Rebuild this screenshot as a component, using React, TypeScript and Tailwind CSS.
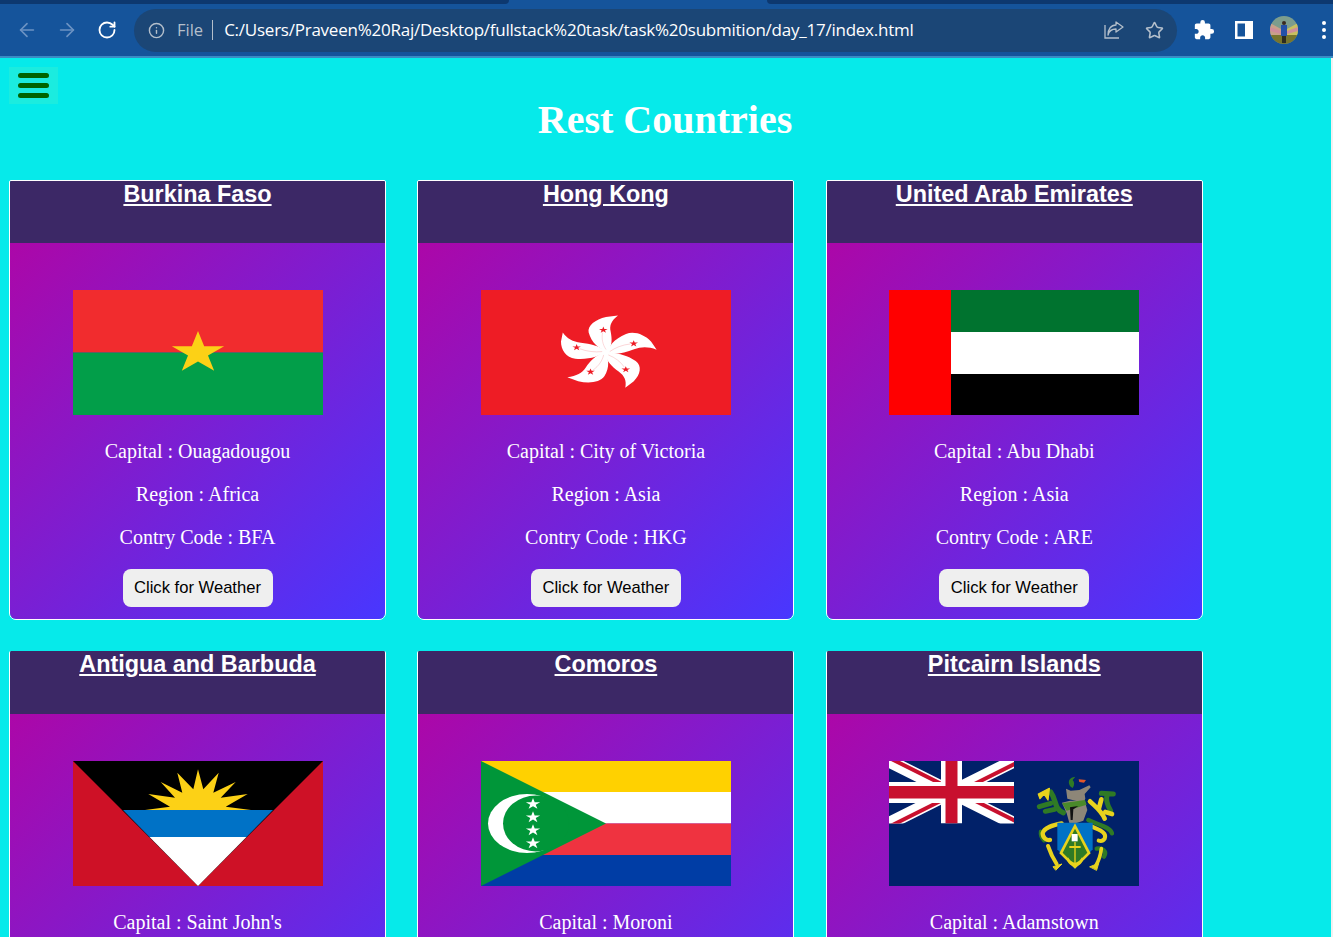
import React from 'react'
import { ArrowLeft, ArrowRight, RotateCw, Info, Star } from 'lucide-react'
import { MdExtension } from 'react-icons/md'

const starPoints = (cx: number, cy: number, r: number, sx = 1) =>
  Array.from({ length: 10 }, (_, i) => {
    const rad = i % 2 === 0 ? r : r * 0.382
    const a = (Math.PI / 5) * i - Math.PI / 2
    return `${cx + rad * Math.cos(a) * sx},${cy + rad * Math.sin(a)}`
  }).join(' ')

function Flag({ children }: { children: React.ReactNode }) {
  return (
    <svg viewBox="0 0 250 125" className="block w-[250px] h-[125px]">
      {children}
    </svg>
  )
}

function BurkinaFaso() {
  return (
    <Flag>
      <rect width="250" height="62.5" fill="#f12c2e" />
      <rect y="62.5" width="250" height="62.5" fill="#029e49" />
      <polygon points={starPoints(125, 63, 22, 1.25)} fill="#fcd116" />
    </Flag>
  )
}

function HongKong() {
  const angles = [0, 72, 144, 216, 288]
  return (
    <Flag>
      <rect width="250" height="125" fill="#ee1c25" />
      <g transform="translate(125 62.5) scale(1.333 1)">
        <circle r="5" fill="#fff" />
        {angles.map((a) => (
          <g key={a} transform={`rotate(${a})`}>
            <path
              d="M1 -1C-5 -3 -11 -10 -13 -20C-14 -27 -8 -33 0 -35.5C3 -36 6 -36.5 9 -37C4 -32 2.5 -27 3.5 -21C4.5 -14 5 -6 1 -1Z"
              fill="#fff"
            />
            <path d="M0 -3C-2.5 -8 -3.5 -14 -2.5 -20" stroke="#f8b0b4" strokeWidth="0.4" fill="none" />
            <polygon points={starPoints(-2, -22.5, 3.4)} fill="#ee1c25" />
          </g>
        ))}
      </g>
    </Flag>
  )
}

function Uae() {
  return (
    <Flag>
      <rect width="250" height="42" fill="#00732f" />
      <rect y="42" width="250" height="42" fill="#fff" />
      <rect y="84" width="250" height="41" fill="#000" />
      <rect width="62" height="125" fill="#f00" />
    </Flag>
  )
}

function Antigua() {
  return (
    <Flag>
      <rect width="250" height="125" fill="#ce1126" />
      <polygon points="0,0 250,0 125,125" fill="#000" />
      <polygon points="50,49 200,49 173.5,76 76.5,76" fill="#0072c6" />
      <polygon points="76.5,76 173.5,76 125,125" fill="#fff" />
      <polygon
        points="72,49 97,45.7 75.3,33 102,36.7 87.7,21 109.3,31.7 104.3,11.7 120.3,28.3 125,8.3 130.3,28.3 145.7,11.7 140.3,31.7 162.7,21 147.7,36.7 174.7,33 152.7,45.7 178,49"
        fill="#fcd116"
      />
    </Flag>
  )
}

function Comoros() {
  return (
    <Flag>
      <rect width="250" height="31.5" fill="#ffd100" />
      <rect y="31" width="250" height="31.5" fill="#fff" />
      <rect y="62.5" width="250" height="31.5" fill="#ef3340" />
      <rect y="94" width="250" height="31" fill="#003da5" />
      <polygon points="0,0 125,62.5 0,125" fill="#009639" />
      <ellipse cx="46" cy="62.5" rx="39" ry="29.5" fill="#fff" />
      <ellipse cx="55" cy="62.5" rx="33" ry="28" fill="#009639" />
      {[43, 56.3, 69.3, 82.3].map((y) => (
        <polygon key={y} points={starPoints(52, y, 6, 1.25)} fill="#fff" />
      ))}
    </Flag>
  )
}

function Pitcairn() {
  return (
    <Flag>
      <rect width="250" height="125" fill="#012169" />
      <svg x="0" y="0" width="125" height="62.5" viewBox="0 0 125 62.5">
        <path d="M0 0L125 62.5M125 0L0 62.5" stroke="#fff" strokeWidth="13" />
        <path d="M0 0L62.5 31.25M125 62.5L62.5 31.25" stroke="#c8102e" strokeWidth="4" transform="translate(2.5 -2)" />
        <path d="M125 0L62.5 31.25M0 62.5L62.5 31.25" stroke="#c8102e" strokeWidth="4" transform="translate(2.5 2)" />
        <rect x="52" width="21" height="62.5" fill="#fff" />
        <rect y="21" width="125" height="21" fill="#fff" />
        <rect x="56.5" width="12" height="62.5" fill="#c8102e" />
        <rect y="25" width="125" height="12.5" fill="#c8102e" />
      </svg>
      {/* coat of arms, drawn at 3x */}
      <g transform="translate(141 9) scale(0.3333)" fill="none" strokeLinecap="round" strokeLinejoin="round">
        <g stroke="#2f7a25">
          <path d="M100 128C72 118 80 90 62 66" strokeWidth="16" />
          <path d="M62 100L28 110M74 118L46 124" strokeWidth="15" />
          <path d="M214 70L250 72M232 72C226 88 230 102 242 122" strokeWidth="15" />
          <path d="M175 150C205 165 240 170 246 190" strokeWidth="13" />
          <path d="M42 212C34 204 30 196 32 184" strokeWidth="11" />
          <path d="M200 236C216 232 232 244 222 260" strokeWidth="13" />
        </g>
        <path d="M25 72L58 55L54 90L42 72L30 86Z" fill="#e8d21d" stroke="#e8d21d" strokeWidth="4" />
        <g stroke="#e8d21d">
          <path d="M180 94C196 110 214 122 224 146M206 118L214 88M226 126L246 132" strokeWidth="14" />
          <path d="M95 160C70 165 42 172 38 190C38 204 50 212 60 210" strokeWidth="13" />
          <path d="M54 228C60 246 68 264 80 282" strokeWidth="12" />
          <path d="M186 170C206 180 232 186 224 206C220 212 212 214 206 212" strokeWidth="12" />
          <path d="M214 236C212 256 206 272 198 286" strokeWidth="11" />
        </g>
        <path d="M70 290L96 282L78 300Z" fill="#e8d21d" stroke="#e8d21d" strokeWidth="3" />
        <path d="M180 290L206 280L200 300Z" fill="#e8d21d" stroke="#e8d21d" strokeWidth="3" />
        <path d="M108 56L122 62L148 60L178 46L182 52L164 72L166 86L160 98L112 86Z" fill="#8d8678" />
        <path d="M96 98L120 92L164 92L172 120L160 152L120 166L110 130Z" fill="#8d8678" />
        <path d="M96 100L165 90L170 104L110 122Z" fill="#4a8a2a" />
        <path d="M120 112L145 108L130 118L128 150L122 150Z" fill="#111" />
        <path d="M122 50C112 38 115 22 136 20L128 30C134 36 134 44 128 54Z" fill="#2f7a25" />
        <path d="M146 28L168 30L162 38L148 36Z" fill="#e2572a" />
        <path d="M82 158H188V238L135 296L82 238Z" fill="#0072c6" />
        <path d="M135 160L182 250L135 296L88 250Z" fill="#e8d21d" />
        <path d="M135 176L172 248L135 286L98 248Z" fill="#2f7a25" />
        <rect x="125" y="192" width="18" height="22" fill="#fff" />
        <path d="M133 216H137V228H152V234H137V278C146 276 152 270 156 262L160 268C156 282 146 288 135 292C124 288 114 282 110 268L114 262C118 270 124 276 133 278V234H118V228H133Z" fill="#e8d21d" />
      </g>
    </Flag>
  )
}

const COUNTRIES = [
  { name: 'Burkina Faso', capital: 'Ouagadougou', region: 'Africa', code: 'BFA', flag: <BurkinaFaso /> },
  { name: 'Hong Kong', capital: 'City of Victoria', region: 'Asia', code: 'HKG', flag: <HongKong /> },
  { name: 'United Arab Emirates', capital: 'Abu Dhabi', region: 'Asia', code: 'ARE', flag: <Uae /> },
  { name: 'Antigua and Barbuda', capital: "Saint John's", region: 'Americas', code: 'ATG', flag: <Antigua /> },
  { name: 'Comoros', capital: 'Moroni', region: 'Africa', code: 'COM', flag: <Comoros /> },
  { name: 'Pitcairn Islands', capital: 'Adamstown', region: 'Oceania', code: 'PCN', flag: <Pitcairn /> },
]

function Card({ country, secondRow }: { country: (typeof COUNTRIES)[number]; secondRow: boolean }) {
  return (
    <div
      className={`border border-white rounded-b-[7px] rounded-t-[2px] overflow-hidden flex flex-col h-[440px] ${
        secondRow ? 'border-t-0' : ''
      }`}
    >
      <div
        className={`bg-[#3c2866] text-center shrink-0 ${secondRow ? 'h-[63px]' : 'h-[62px]'}`}
      >
        <a className="block font-['Liberation_Sans',sans-serif] font-bold text-white underline text-[23.4px] leading-[26px]">
          {country.name}
        </a>
      </div>
      <div className="flex-1 bg-linear-to-br/srgb from-[#ac07a8] to-[#4837ff] flex flex-col items-center pt-[47px] font-['Liberation_Serif',serif] text-white text-[20px] leading-[22px]">
        {country.flag}
        <p className="mt-[25px]">Capital : {country.capital}</p>
        <p className="mt-[21px]">Region : {country.region}</p>
        <p className="mt-[21px]">Contry Code : {country.code}</p>
        <button className="mt-[21px] w-[150px] h-[38px] rounded-[8px] bg-[#efefef] text-black font-['Liberation_Sans',sans-serif] text-[16.6px]">
          Click for Weather
        </button>
      </div>
    </div>
  )
}

function BrowserBar() {
  return (
    <div className="h-[58px] shrink-0 bg-[#15549b] border-b-2 border-[#3a8cc4] flex flex-col">
      <div className="h-[4px] flex">
        <div className="w-[509px] bg-[#0d386f] rounded-br-[5px]" />
        <div className="flex-1" />
        <div className="w-[566px] bg-[#0d386f] rounded-bl-[5px]" />
      </div>
      <div className="flex-1 flex items-center pl-[16px] pr-[4px]">
        <ArrowLeft size={22} className="text-[#6c93c3]" strokeWidth={1.8} />
        <ArrowRight size={22} className="text-[#6c93c3] ml-[18px]" strokeWidth={1.8} />
        <RotateCw size={20} className="text-white ml-[19px]" strokeWidth={2.2} />
        <div className="ml-[17px] w-[1043px] h-[43px] rounded-full bg-[#1b4676] flex items-center pl-[14px] pr-[13px]">
          <Info size={17} className="text-[#b4bfcb]" strokeWidth={2} />
          <span className="ml-[12px] font-['Open_Sans',sans-serif] text-[16.5px] text-[#b4bfcb]">File</span>
          <div className="ml-[9px] w-px h-[20px] bg-[#b4bfcb]" />
          <span className="ml-[11px] font-['Open_Sans',sans-serif] text-[17px] tracking-[-0.24px] text-white whitespace-nowrap">
            C:/Users/Praveen%20Raj/Desktop/fullstack%20task/task%20submition/day_17/index.html
          </span>
          <svg viewBox="0 0 20 20" className="ml-auto w-[20px] h-[20px] text-[#b4bfcb]" fill="none" stroke="currentColor" strokeWidth="1.3">
            <path d="M1 5V18H15" />
            <path d="M12 2L19 7L12 12V9C7 9 5 11 4 15C4 9 7 5 12 5Z" strokeLinejoin="round" />
          </svg>
          <Star size={19} className="ml-[21px] text-[#b4bfcb]" strokeWidth={2} />
        </div>
        <MdExtension size={22} className="text-white ml-[16px]" />
        <svg viewBox="0 0 18 18" className="ml-[20px] w-[18px] h-[18px]">
          <path d="M0 0H18V18H0ZM2.5 2.5V15.5H10V2.5Z" fill="#fff" fillRule="evenodd" />
        </svg>
        <svg viewBox="0 0 28 28" className="ml-[17px] w-[28px] h-[28px] rounded-full">
          <rect width="28" height="28" fill="#7d9d8d" />
          <path d="M0 7L11 13L11 20H0Z" fill="#c9a08a" />
          <path d="M0 11L11 15L11 18L0 15Z" fill="#cf8d9c" />
          <path d="M28 7L17 13L17 20H28Z" fill="#c9c060" />
          <path d="M28 11L17 15L17 18L28 15Z" fill="#cf8d9c" />
          <rect y="19" width="28" height="9" fill="#77752e" />
          <rect x="11" y="9" width="6" height="11" fill="#2350a8" />
          <rect x="12" y="20" width="4" height="7" fill="#2b2b20" />
          <circle cx="14" cy="7" r="2" fill="#3a2a20" />
        </svg>
        <div className="ml-[24px] flex flex-col gap-[3px]">
          <div className="w-[4px] h-[4px] rounded-full bg-white" />
          <div className="w-[4px] h-[4px] rounded-full bg-white" />
          <div className="w-[4px] h-[4px] rounded-full bg-white" />
        </div>
      </div>
    </div>
  )
}

export default function App() {
  return (
    <div className="h-[937px] overflow-hidden flex flex-col bg-[#06eaea]">
      <BrowserBar />
      <div className="flex-1 pt-[9px] border-r-2 border-[#f1f1f1]">
        <button className="ml-[9px] w-[49px] h-[37px] bg-[#1becdf] flex flex-col items-center justify-center gap-[5px]">
          <span className="block w-[31px] h-[5px] rounded-full bg-[#006400]" />
          <span className="block w-[31px] h-[5px] rounded-full bg-[#006400]" />
          <span className="block w-[31px] h-[5px] rounded-full bg-[#006400]" />
        </button>
        <h1 className="-mt-[7px] mb-[37px] pr-[1px] text-center font-['Liberation_Serif',serif] font-bold text-white text-[40px] leading-[46px]">
          Rest Countries
        </h1>
        <div className="grid grid-cols-[repeat(3,377px)] gap-x-[31.4px] gap-y-[31px] pl-[9px]">
          {COUNTRIES.map((c, i) => (
            <Card key={c.code} country={c} secondRow={i > 2} />
          ))}
        </div>
      </div>
    </div>
  )
}
